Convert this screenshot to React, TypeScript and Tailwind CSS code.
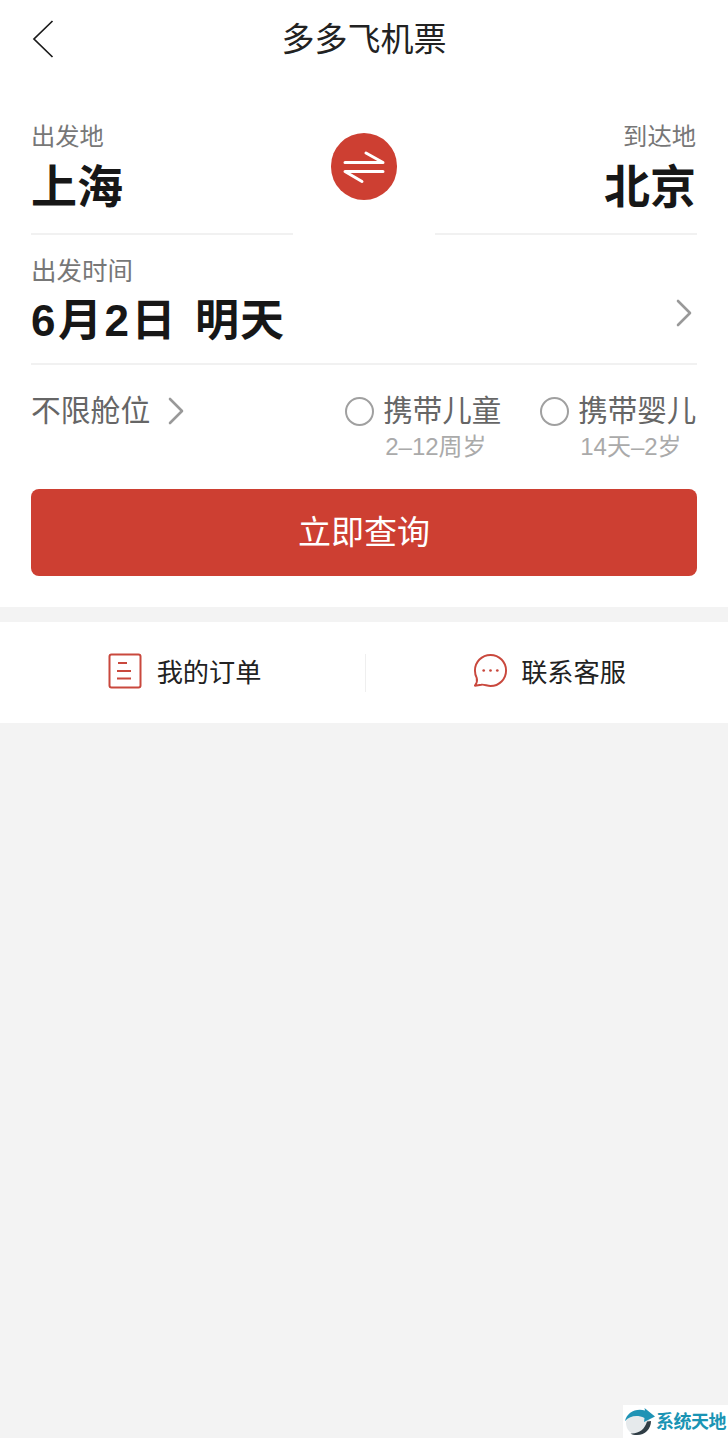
import React from 'react'

function Chevron({ className }: { className: string }) {
  return (
    <svg viewBox="0 0 16 28" fill="none" className={className}>
      <path d="M2 2L14 14L2 26" stroke="currentColor" strokeWidth="2.6" strokeLinecap="round" strokeLinejoin="round" />
    </svg>
  )
}

function PassengerOption({ label, note, className }: { label: string; note: string; className: string }) {
  return (
    <div className={className}>
      <div className="flex items-center h-[32px]">
        <span className="w-[29px] h-[29px] rounded-full border-2 border-[#a0a0a0] shrink-0" />
        <span className="ml-[9px] text-[29.5px] leading-[32px] text-[#666] whitespace-nowrap">{label}</span>
      </div>
      <div className="ml-[40px] mt-[4px] text-[24px] leading-[32px] text-[#aaa] whitespace-nowrap">{note}</div>
    </div>
  )
}

export default function App() {
  return (
    <div className="relative w-[728px] h-[1438px] flex flex-col bg-[#f3f3f3] overflow-hidden font-['Liberation_Sans','Noto_Sans_CJK_SC',sans-serif]">
      {/* Search card */}
      <section className="bg-white h-[607px] shrink-0 px-[31px]">
        {/* Header */}
        <header className="relative h-[78px] flex items-center justify-center">
          <svg viewBox="0 0 22 38" fill="none" className="absolute left-[1px] top-[20px] w-[22px] h-[38px] text-[#1a1a1a]">
            <path d="M20.5 1L2 19L20.5 37" stroke="currentColor" strokeWidth="1.7" />
          </svg>
          <h1 className="pt-[2px] text-[33px] leading-[44px] font-normal text-[#222]">多多飞机票</h1>
        </header>

        {/* Route */}
        <div className="flex justify-between h-[157px]">
          <div className="w-[262px] border-b-2 border-[#f1f1f1]">
            <div className="mt-[44px] text-[24.3px] leading-[30px] text-[#777]">出发地</div>
            <div className="mt-[6px] text-[46px] leading-[58px] font-bold text-[#171717]">上海</div>
          </div>
          <div className="mt-[55px] w-[66px] h-[67px] rounded-full bg-[#cd3f32] flex items-center justify-center">
            <svg viewBox="0 0 42 34" fill="none" className="w-[42px] h-[34px] text-white">
              <path d="M2 12.5H40L23 3M40 21.5H2L19 31.5" stroke="currentColor" strokeWidth="3" strokeLinecap="round" strokeLinejoin="round" />
            </svg>
          </div>
          <div className="w-[262px] border-b-2 border-[#f1f1f1] pr-[1px] text-right">
            <div className="mt-[44px] text-[24.3px] leading-[30px] text-[#777]">到达地</div>
            <div className="mt-[6px] text-[46px] leading-[58px] font-bold text-[#171717]">北京</div>
          </div>
        </div>

        {/* Departure date */}
        <div className="relative h-[130px] border-b-2 border-[#f1f1f1]">
          <div className="pt-[20px] text-[25.5px] leading-[32px] text-[#777]">出发时间</div>
          <div className="mt-[7px] flex gap-[17px] text-[44px] leading-[54px] font-bold text-[#171717] whitespace-nowrap">
            <span className="tracking-[2.5px]">6月2日</span>
            <span className="tracking-[1px]">明天</span>
          </div>
          <Chevron className="absolute right-[5px] top-[64px] w-[16px] h-[28px] text-[#999]" />
        </div>

        {/* Cabin and passengers */}
        <div className="flex h-[124px] pt-[30px]">
          <div className="flex items-center h-[32px]">
            <span className="text-[29.8px] leading-[32px] text-[#666] whitespace-nowrap">不限舱位</span>
            <Chevron className="ml-[18px] w-[16px] h-[28px] text-[#999]" />
          </div>
          <PassengerOption label="携带儿童" note="2–12周岁" className="ml-[161px] w-[195px]" />
          <PassengerOption label="携带婴儿" note="14天–2岁" className="" />
        </div>

        {/* Submit */}
        <button className="w-full h-[87px] rounded-[8px] bg-[#cd3f32] text-white text-[33px] font-normal">立即查询</button>
      </section>

      <div className="h-[15px] shrink-0" />

      {/* Quick links */}
      <nav className="bg-white h-[101px] shrink-0 flex items-center">
        <a className="w-[365px] flex items-center justify-center gap-[15px] pl-[4px] text-[26.2px] text-[#222]">
          <svg viewBox="0 0 34 36" fill="none" className="w-[34px] h-[36px] text-[#c9483d] -mt-[3px]">
            <rect x="1.5" y="1.5" width="31" height="33" rx="2" stroke="currentColor" strokeWidth="2" />
            <path d="M10 10H19M9 18H23M9 25.5H23" stroke="currentColor" strokeWidth="2" />
          </svg>
          <span className="pt-[3px]">我的订单</span>
        </a>
        <div className="w-px h-[38px] bg-[#efefef]" />
        <a className="flex-1 flex items-center justify-center gap-[13px] pl-[5px] text-[26.2px] text-[#222]">
          <svg viewBox="0 0 36 36" fill="none" className="w-[35px] h-[35px] text-[#c9483d] -mt-[3px]">
            <path d="M18 2C27 2 34 9.2 34 18C34 26.8 27 34 18 34C14.5 34 11.5 32 8.5 32.6L2 33.6C4 31 4.6 28.4 3.8 25.6C2.6 23.2 2 20.8 2 18C2 9.2 9 2 18 2Z" stroke="currentColor" strokeWidth="2" strokeLinejoin="round" />
            <circle cx="11" cy="18" r="1.4" fill="currentColor" />
            <circle cx="18" cy="18" r="1.4" fill="currentColor" />
            <circle cx="25" cy="18" r="1.4" fill="currentColor" />
          </svg>
          <span className="pt-[3px]">联系客服</span>
        </a>
      </nav>

      {/* Watermark */}
      <div className="absolute right-0 bottom-0 w-[105px] h-[33px] bg-white flex items-center">
        <svg viewBox="0 0 32 28" className="w-[32px] h-[28px] shrink-0 ml-[1px]">
          <circle cx="14" cy="15" r="12" fill="#e6eaec" />
          <path d="M1 13C3 5 11 0 21 2.5L20.5 0L31 8.5L20 14L20.5 10C13 6.5 6 8 1 13Z" fill="#1f93b5" />
          <path d="M27 13C27 21 21 27 13 27C10 27 8 26.4 6.5 25.4C15 26 21 21 23 13.5Z" fill="#2f3d45" />
        </svg>
        <span className="text-[18px] leading-[24px] font-bold text-[#1a94b4] whitespace-nowrap tracking-[-0.5px]">系统天地</span>
      </div>
    </div>
  )
}
